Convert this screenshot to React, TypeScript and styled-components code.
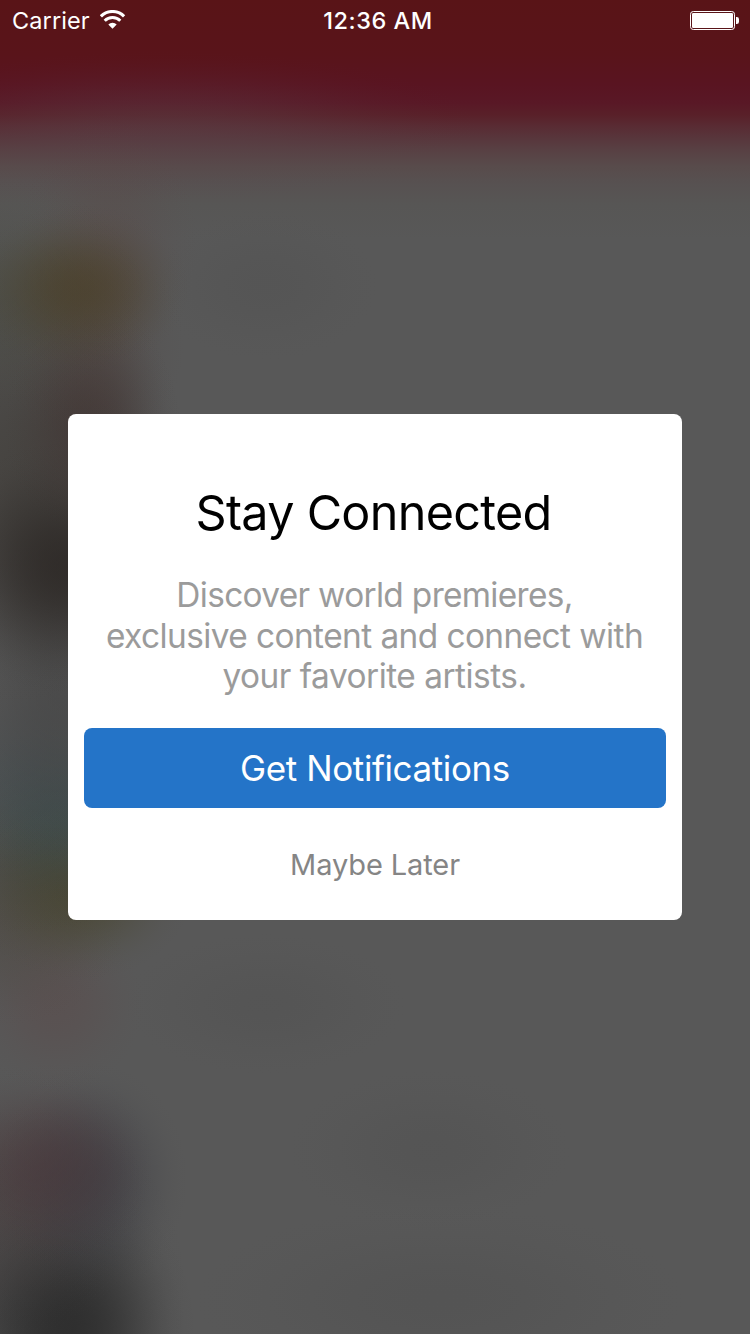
import React from 'react';
import styled, { createGlobalStyle } from 'styled-components';

const GlobalStyle = createGlobalStyle`
  * { box-sizing: border-box; }
  body { margin: 0; background: #585858; }
`;

const fontStack = "Inter, 'Liberation Sans', sans-serif";

// A soft spot of colour with a flat middle and a smooth falloff.
const glow = (x: number, y: number, rx: number, ry: number, rgb: string, alpha: number) => {
  const stops = [0, 0.1, 0.2, 0.3, 0.4, 0.5, 0.6, 0.7, 0.8, 0.9]
    .map((t) => `rgba(${rgb}, ${(alpha * (0.5 + 0.5 * Math.cos(Math.PI * t))).toFixed(4)}) ${t * 100}%`)
    .join(', ');
  return `radial-gradient(${rx}px ${ry}px at ${x}px ${y}px, ${stops}, rgba(${rgb}, 0) 100%)`;
};

const backdrop = [
  glow(80, 288, 112, 86, '74, 62, 36', 0.64),
  glow(0, 295, 150, 120, '68, 70, 58', 0.42),
  glow(108, 240, 95, 130, '90, 68, 66', 0.3),
  glow(92, 345, 98, 110, '76, 60, 56', 0.32),
  glow(92, 425, 92, 120, '60, 46, 44', 0.56),
  glow(68, 567, 140, 130, '36, 31, 28', 0.7),
  glow(20, 470, 170, 240, '60, 56, 51', 0.62),
  glow(60, 700, 120, 170, '62, 62, 62', 0.5),
  glow(25, 780, 130, 95, '66, 76, 80', 0.45),
  glow(68, 812, 110, 90, '50, 72, 70', 0.48),
  glow(30, 850, 130, 90, '60, 64, 54', 0.4),
  glow(80, 892, 115, 90, '68, 64, 36', 0.58),
  glow(10, 920, 120, 110, '76, 70, 62', 0.5),
  glow(55, 1003, 95, 95, '92, 70, 70', 0.36),
  glow(48, 1166, 110, 105, '74, 52, 56', 0.5),
  glow(92, 1180, 98, 120, '60, 60, 66', 0.66),
  glow(0, 1200, 150, 140, '74, 66, 66', 0.5),
  glow(72, 1330, 125, 150, '38, 38, 38', 0.74),
  glow(30, 1290, 160, 190, '58, 58, 58', 0.62),
  glow(265, 285, 120, 80, '80, 80, 80', 0.35),
  glow(265, 1004, 150, 75, '80, 80, 80', 0.4),
  glow(430, 1150, 150, 85, '80, 80, 80', 0.4),
  glow(440, 1300, 260, 100, '78, 78, 78', 0.4),
  glow(165, 128, 320, 78, '88, 70, 76', 0.36),
  `linear-gradient(to bottom, #591417 0, #59141a 55px, #591421 85px, #591826 103px,
    #592029 115px, #592b33 126px, #58353b 137px, #584144 151px, #584b4b 166px,
    #575151 183px, #575655 205px, #585858 240px)`,
].join(', ');

const Screen = styled.main`
  display: flex;
  flex-direction: column;
  width: 750px;
  height: 1334px;
  overflow: hidden;
  font-family: ${fontStack};
  background: ${backdrop};
`;

const StatusBar = styled.header`
  display: grid;
  grid-template-columns: 1fr auto 1fr;
  align-items: center;
  flex: none;
  height: 40px;
  padding: 0 11px 0 12px;
  color: #fff;
  font-size: 23.5px;
  line-height: 36px;
`;

const Network = styled.div`
  display: flex;
  align-items: center;
  gap: 10px;
  letter-spacing: 0.1px;
`;

const StatusText = styled.span`
  padding-top: 2px;
`;

const Clock = styled.time`
  padding: 2px 0 0 5px;
  font-weight: 500;
  letter-spacing: 0.5px;
`;

const Battery = styled.svg`
  justify-self: end;
  display: block;
`;

const ModalLayer = styled.section`
  display: flex;
  flex: 1;
  align-items: flex-start;
  justify-content: center;
  padding-top: 374px;
`;

const Dialog = styled.div`
  display: flex;
  flex-direction: column;
  width: 614px;
  height: 506px;
  padding: 66px 16px 0;
  border-radius: 8px;
  background: #fff;
  text-align: center;
`;

const Title = styled.h1`
  margin: 0;
  padding-right: 3px;
  color: #000;
  font-size: 48.5px;
  font-weight: 400;
  line-height: 66px;
  letter-spacing: -0.7px;
  white-space: nowrap;
`;

const Message = styled.p`
  margin: 29px 0 31px;
  color: #9b9b9b;
  font-size: 33.4px;
  line-height: 40.6px;
`;

const MessageLine = styled.span<{ $tracking: number }>`
  display: block;
  padding-right: 1px;
  letter-spacing: ${({ $tracking }) => $tracking}px;
  white-space: nowrap;
`;

const Button = styled.button`
  flex: none;
  width: 100%;
  margin: 0;
  padding: 0;
  border: 0;
  font-family: inherit;
  font-weight: 400;
  white-space: nowrap;
`;

const PrimaryButton = styled(Button)`
  height: 80px;
  border-radius: 8px;
  background: #2474c8;
  color: #fff;
  font-size: 35px;
  letter-spacing: -0.4px;
`;

const TextButton = styled(Button)`
  height: 80px;
  margin-top: 17px;
  background: transparent;
  color: #858585;
  font-size: 29px;
  letter-spacing: -0.1px;
`;

const WifiIcon = () => (
  <svg width="26" height="20" viewBox="0 0 26 20" fill="none" stroke="#fff" aria-hidden="true">
    <path d="M0.9 6.3A16.4 16.4 0 0 1 24.1 6.3" strokeWidth="3.1" />
    <path d="M4.7 10.8A11 11 0 0 1 20.3 10.8" strokeWidth="3" />
    <path d="M8.3 14.6A5.8 5.8 0 0 1 16.7 14.6L12.5 18.8Z" fill="#fff" stroke="none" />
  </svg>
);

export default function App() {
  return (
    <>
      <GlobalStyle />
      <Screen>
        <StatusBar>
          <Network>
            <StatusText>Carrier</StatusText>
            <WifiIcon />
          </Network>
          <Clock>12:36 AM</Clock>
          <Battery width="49" height="20" viewBox="0 0 49 20" aria-label="Battery full">
            <rect x="0.5" y="1.5" width="44" height="18" rx="2.8" fill="none" stroke="#fff" />
            <rect x="2" y="3" width="41" height="15" rx="1.2" fill="#fff" />
            <path d="M46 7h0.8a2.2 2.2 0 0 1 2.2 2.2v2.6a2.2 2.2 0 0 1-2.2 2.2H46z" fill="#fff" />
          </Battery>
        </StatusBar>
        <ModalLayer>
          <Dialog role="dialog" aria-modal="true" aria-labelledby="dialog-title">
            <Title id="dialog-title">Stay Connected</Title>
            <Message>
              <MessageLine $tracking={-0.67}>Discover world premieres,</MessageLine>
              <MessageLine $tracking={-0.57}>exclusive content and connect with</MessageLine>
              <MessageLine $tracking={-0.49}>your favorite artists.</MessageLine>
            </Message>
            <PrimaryButton type="button">Get Notifications</PrimaryButton>
            <TextButton type="button">Maybe Later</TextButton>
          </Dialog>
        </ModalLayer>
      </Screen>
    </>
  );
}
